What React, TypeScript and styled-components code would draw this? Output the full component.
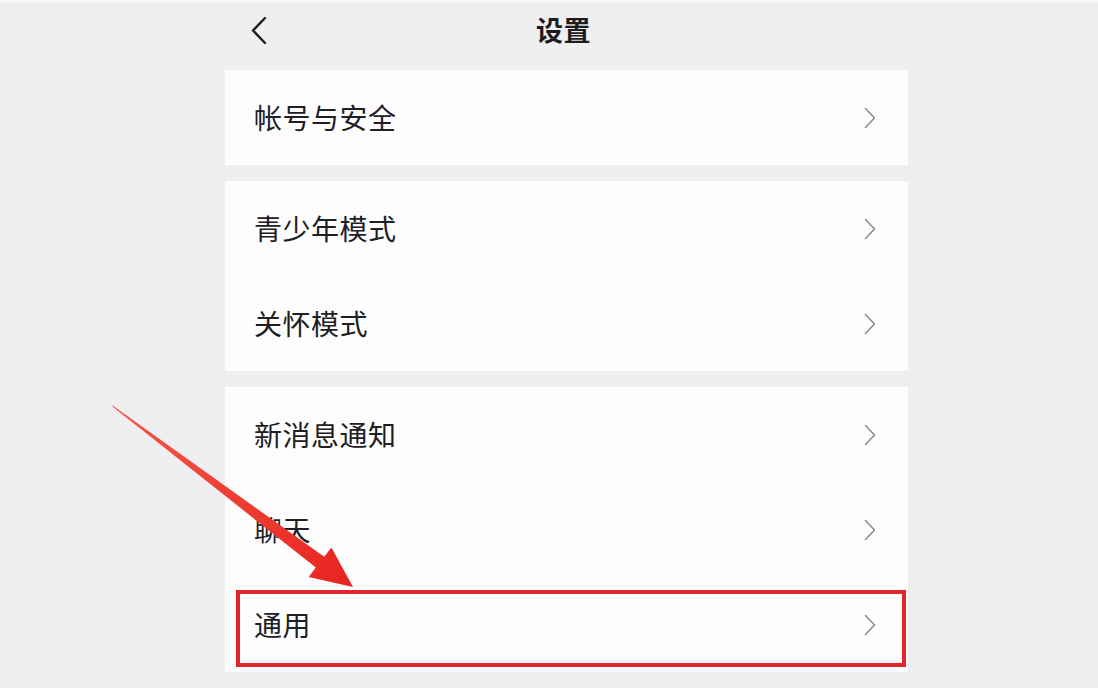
import React from "react";
import styled, { createGlobalStyle } from "styled-components";

const Global = createGlobalStyle`
  html, body { margin: 0; padding: 0; }
  body {
    background: #efeff1;
    font-family: "Noto Sans CJK SC", "Noto Sans", sans-serif;
    width: 1098px;
    height: 688px;
    overflow: hidden;
  }
`;

const Page = styled.div`
  position: relative;
  width: 1098px;
  height: 688px;
  background: #efeff1;
  box-sizing: border-box;
  padding-left: 225px;
  border-top: 3px solid #f6f6f7;
`;

const Column = styled.div`
  width: 683px;
  display: flex;
  flex-direction: column;
  gap: 16px;
`;

const Header = styled.header`
  height: 59px;
  display: flex;
  align-items: center;
  justify-content: center;
  position: relative;
  margin-bottom: -8px;
`;

const BackButton = styled.span`
  position: absolute;
  left: 25px;
  top: 12px;
  width: 20px;
  height: 30px;
  display: flex;
`;

const Title = styled.h1`
  margin: -6px 0 0 -6px;
  font-size: 27px;
  font-weight: 700;
  color: #1c1c1e;
  letter-spacing: 0.5px;
`;

const Card = styled.section`
  background: #fdfdfe;
  display: flex;
  flex-direction: column;
`;

const Row = styled.div<{ $highlight?: boolean }>`
  position: relative;
  height: 95px;
  display: flex;
  align-items: center;
  justify-content: space-between;
  padding: 0 32px 0 29px;
  box-sizing: border-box;
  ${(p) =>
    p.$highlight &&
    `
    &::after {
      content: "";
      position: absolute;
      left: 11px;
      right: 2px;
      top: 13px;
      bottom: 5px;
      border: 4px solid #e3262b;
      box-sizing: border-box;
    }
  `}
`;

const Label = styled.span`
  font-size: 28px;
  color: #202024;
  letter-spacing: 0.5px;
  margin-top: -2px;
`;

const Chevron = () => (
  <svg width="12" height="22" viewBox="0 0 12 22">
    <path d="M1.5 1.5 L10.5 11 L1.5 20.5" fill="none" stroke="#8c8c90" strokeWidth="1.6" strokeLinecap="round" strokeLinejoin="round" />
  </svg>
);

const ArrowOverlay = styled.svg`
  position: absolute;
  left: 0;
  top: 0;
  width: 1098px;
  height: 688px;
  pointer-events: none;
`;

const rows: { label: string; highlight?: boolean }[][] = [
  [{ label: "帐号与安全" }],
  [{ label: "青少年模式" }, { label: "关怀模式" }],
  [{ label: "新消息通知" }, { label: "聊天" }, { label: "通用", highlight: true }],
];

export default function App() {
  return (
    <>
      <Global />
      <Page>
        <Column>
          <Header>
            <BackButton>
              <svg width="20" height="30" viewBox="0 0 20 30">
                <path d="M15 3 L3 15.5 L15 28" fill="none" stroke="#1c1c1e" strokeWidth="2.4" strokeLinecap="round" strokeLinejoin="round" />
              </svg>
            </BackButton>
            <Title>设置</Title>
          </Header>
          {rows.map((group, i) => (
            <Card key={i}>
              {group.map((r) => (
                <Row key={r.label} $highlight={r.highlight}>
                  <Label>{r.label}</Label>
                  <Chevron />
                </Row>
              ))}
            </Card>
          ))}
        </Column>
        <ArrowOverlay viewBox="0 0 1098 688">
          <defs>
            <linearGradient id="ag" x1="112" y1="403" x2="352" y2="583" gradientUnits="userSpaceOnUse">
              <stop offset="0" stopColor="#f25a4a" />
              <stop offset="1" stopColor="#e8241f" />
            </linearGradient>
          </defs>
          <polygon
            points="112,402 113,404 315.8,564.6 308.6,574 353,584 331.4,544.4 324.2,553.8"
            fill="url(#ag)"
          />
        </ArrowOverlay>
      </Page>
    </>
  );
}
